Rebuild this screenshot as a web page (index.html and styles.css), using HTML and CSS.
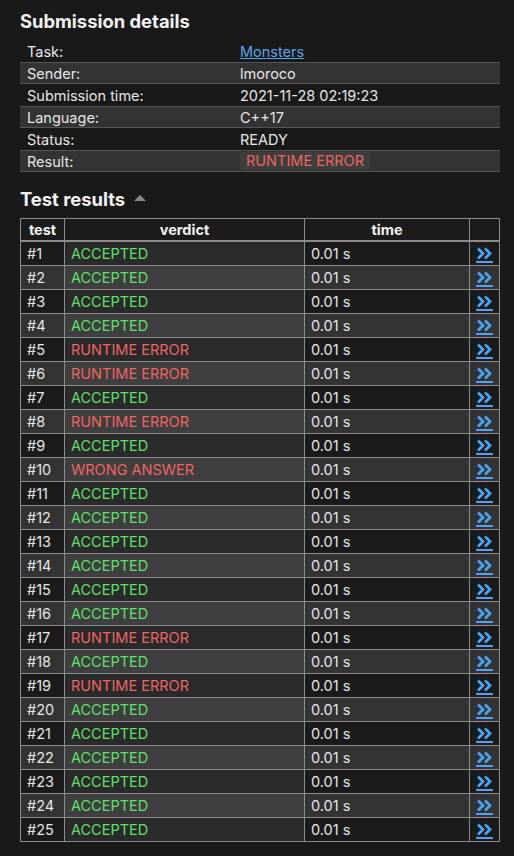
FILE: index.html
```html
<!DOCTYPE html>
<html>
<head>
<meta charset="utf-8">
<link rel="stylesheet" href="styles.css">
</head>
<body>
<div class="page">
  <h2 class="title">Submission details</h2>
  <div class="details">
    <div class="row"><span class="k">Task:</span><span><a href="#" class="link">Monsters</a></span></div>
    <div class="row alt"><span class="k">Sender:</span><span>lmoroco</span></div>
    <div class="row"><span class="k">Submission time:</span><span>2021-11-28 02:19:23</span></div>
    <div class="row alt"><span class="k">Language:</span><span>C++17</span></div>
    <div class="row"><span class="k">Status:</span><span>READY</span></div>
    <div class="row alt"><span class="k">Result:</span><span><span class="badge">RUNTIME ERROR</span></span></div>
  </div>

  <h2 class="title results-title">Test results <span class="caret"></span></h2>
  <table class="results">
    <thead>
      <tr><th class="c-test">test</th><th class="c-verdict">verdict</th><th class="c-time">time</th><th class="c-link"></th></tr>
    </thead>
    <tbody id="rows"></tbody>
  </table>
</div>
<script src="app.js"></script>
</body>
</html>
```
FILE: app.js
```js
const verdicts = ["A","A","A","A","R","R","A","R","A","W","A","A","A","A","A","A","R","A","R","A","A","A","A","A","A"];
const map = {A:["ACCEPTED","ok"],R:["RUNTIME ERROR","bad"],W:["WRONG ANSWER","bad"]};
const icon = '<svg width="17" height="13" viewBox="0 0 17 13"><path d="M2 1.5 L7 6.5 L2 11.5" fill="none" stroke="#4aa3f5" stroke-width="2.8" stroke-linejoin="miter"/><path d="M9 1.5 L14 6.5 L9 11.5" fill="none" stroke="#4aa3f5" stroke-width="2.8" stroke-linejoin="miter"/></svg>';
let html = "";
verdicts.forEach((v, i) => {
  const [t, c] = map[v];
  html += `<tr><td class="c-test">#${i+1}</td><td class="c-verdict ${c}">${t}</td><td class="c-time">0.01 s</td><td class="c-link"><a href="#" class="arrow">${icon}</a></td></tr>`;
});
document.getElementById("rows").innerHTML = html;
```
FILE: styles.css
```css
html, body {
  margin: 0;
  padding: 0;
  background: #191919;
}
body {
  font-family: Inter, "Noto Sans", sans-serif;
  font-size: 14.5px;
  color: #e6e6e6;
}
.page {
  padding: 9px 14px 20px 20px;
}
.title {
  margin: 0;
  font-size: 18.4px;
  font-weight: 700;
  line-height: 24px;
  color: #f2f2f2;
}
.details {
  width: 480px;
  margin-top: 7px;
}
.row {
  display: grid;
  grid-template-columns: 220px 1fr;
  height: 22px;
  box-sizing: border-box;
  align-items: center;
  padding-left: 7px;
}
.row .k {
  display: block;
}
.row > span:last-child {
  margin-left: -7px;
}
.row.alt {
  background: #333333;
  border-top: 1px solid #555;
  border-bottom: 1px solid #555;
}
.link {
  color: #55a6ef;
  text-decoration: underline;
}
.badge {
  display: inline-block;
  padding: 0 6px;
  background: #3e3e3e;
  border-radius: 3px;
  color: #f06464;
  line-height: 18px;
}
.results-title {
  margin-top: 15px;
  display: flex;
  align-items: center;
}
.caret {
  display: inline-block;
  width: 0;
  height: 0;
  margin-left: 9px;
  margin-top: -2px;
  border-left: 6px solid transparent;
  border-right: 6px solid transparent;
  border-bottom: 6px solid #8a8a8a;
}
.results {
  width: 480px;
  border-collapse: collapse;
  margin-top: 7px;
  border: 1px solid #8c8c8c;
}
.results th, .results td {
  border: 1px solid #8c8c8c;
  padding: 0 6px;
  height: 23px;
  line-height: 20px;
  text-align: left;
}
.results th {
  text-align: center;
  font-weight: 700;
  background: #1b1b1b;
  color: #f2f2f2;
  height: 21px;
  border-bottom: 2px solid #8c8c8c;
}
.results th.c-test { width: 31px; }
.results th.c-verdict { width: 227px; }
.results th.c-time { width: 152px; }
.results th.c-link { width: 17px; }
.results td.c-test, .results td.c-time, .results td.c-link { background: #1b1b1b; }
.results td.c-verdict { background: #2a2a2a; }
.results td.c-time { padding-left: 6px; }
.results tbody tr:nth-child(even) td.c-test,
.results tbody tr:nth-child(even) td.c-time,
.results tbody tr:nth-child(even) td.c-link { background: #333333; }
.results tbody tr:nth-child(even) td.c-verdict { background: #3f3f3f; }
.ok { color: #5ee06a; }
.bad { color: #f06464; }
.results td.c-link { text-align: center; padding: 0 4px; }
.arrow {
  display: inline-block;
  vertical-align: middle;
  line-height: 0;
  padding-bottom: 1px;
  border-bottom: 2px solid #4aa3f5;
}
.arrow svg { display: block; }
```
